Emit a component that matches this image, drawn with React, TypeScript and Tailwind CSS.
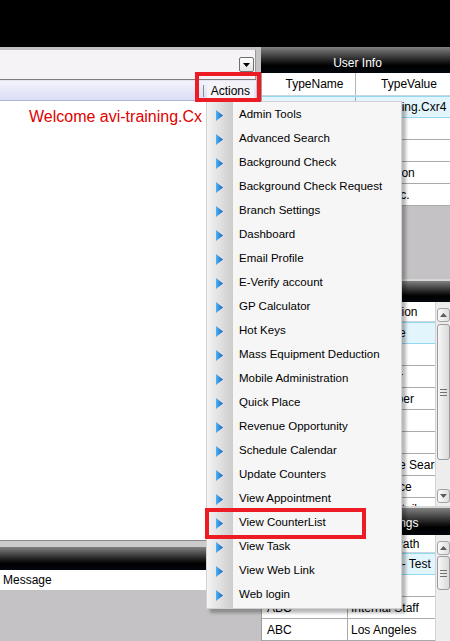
import React from 'react';
import clsx from 'clsx';

const menuItems = [
  'Admin Tools',
  'Advanced Search',
  'Background Check',
  'Background Check Request',
  'Branch Settings',
  'Dashboard',
  'Email Profile',
  'E-Verify account',
  'GP Calculator',
  'Hot Keys',
  'Mass Equipment Deduction',
  'Mobile Administration',
  'Quick Place',
  'Revenue Opportunity',
  'Schedule Calendar',
  'Update Counters',
  'View Appointment',
  'View CounterList',
  'View Task',
  'View Web Link',
  'Web login',
];

const userInfoRows: [string, string][] = [
  ['UserName', 'avi-training.Cxr4'],
  ['FirstName', ''],
  ['LastName', ''],
  ['Department', 'IT Division'],
  ['Company', 'Staff, Inc.'],
];

const notificationRows: [string, string][] = [
  ['Alert', 'Candidate'],
  ['Alert', 'Order'],
  ['Alert', 'Customer'],
  ['Task', 'Timekeeper'],
  ['Task', 'Invoice'],
  ['Task', 'Payroll'],
  ['Search', 'Candidate Search'],
  ['Report', 'Attendance'],
  ['Report', 'Billing Detail'],
];

const branchRows: [string, string][] = [
  ['ABC', 'Anaheim - Test'],
  ['', ''],
  ['ABC', 'Internal Staff'],
  ['ABC', 'Los Angeles'],
];

const headerBg =
  'bg-[linear-gradient(to_bottom,#808080,#4a4a4a_30%,#161616_58%,#000_72%,#03070d)]';

function DarkHeader({ title, className }: { title?: string; className: string }) {
  return (
    <div className={clsx('flex justify-center text-[12px] text-white', headerBg, className)}>
      {title}
    </div>
  );
}

function Arrow() {
  return (
    <svg width="7" height="11" viewBox="0 0 7 11">
      <defs>
        <linearGradient id="arr" x1="0" y1="0" x2="1" y2="0">
          <stop offset="0" stopColor="#4fb4f4" />
          <stop offset="1" stopColor="#0c63c4" />
        </linearGradient>
      </defs>
      <polygon points="0,0 7,5.5 0,11" fill="url(#arr)" />
    </svg>
  );
}

function ActionsMenu() {
  return (
    <div className="absolute left-[206px] top-[101px] flex w-[196px] border border-[#d2d2d2] bg-[#f6f6f6] shadow-[4px_4px_3px_rgba(0,0,0,0.28)]">
      <div className="flex w-[26px] flex-col bg-gradient-to-r from-[#f4f4f4] to-[#cdcdcd] py-px">
        {menuItems.map((item) => (
          <div key={item} className="flex h-[24px] items-center pl-[9px]">
            <Arrow />
          </div>
        ))}
      </div>
      <div className="flex flex-1 flex-col py-px pl-[6px] text-[11.5px]">
        {menuItems.map((item) => (
          <div key={item} className="flex h-[24px] items-center whitespace-nowrap">
            {item}
          </div>
        ))}
      </div>
    </div>
  );
}

function ScrollButton({ up }: { up?: boolean }) {
  return (
    <div className="flex h-[14px] w-[13px] items-center justify-center rounded-[3px] border border-[#a3a3a3] bg-gradient-to-r from-[#fbfbfb] to-[#dedede]">
      <svg width="7" height="4" viewBox="0 0 7 4">
        <polygon points={up ? '0,4 7,4 3.5,0' : '0,0 7,0 3.5,4'} fill="#5c5c5c" />
      </svg>
    </div>
  );
}

function ScrollBar({ className, thumb, showDown }: { className: string; thumb: string; showDown?: boolean }) {
  return (
    <div className={clsx('flex w-[15px] flex-col items-center border-l border-[#d4d4d4] bg-[#ededed]', className)}>
      <ScrollButton up />
      <div
        className={clsx(
          'flex w-[13px] flex-col items-center justify-center gap-[2px] rounded-[3px] border border-[#9b9b9b] bg-gradient-to-r from-[#f7f7f7] to-[#dadada]',
          thumb
        )}
      >
        <div className="h-px w-[7px] bg-[#707070]" />
        <div className="h-px w-[7px] bg-[#707070]" />
        <div className="h-px w-[7px] bg-[#707070]" />
      </div>
      <div className="flex-1" />
      {showDown && <ScrollButton />}
    </div>
  );
}

type GridProps = {
  firstCol: string;
  headers: [string, string];
  headerClass: string;
  headerPad: string;
  rows: [string, string][];
  selected: number;
};

function Grid({ firstCol, headers, headerClass, headerPad, rows, selected }: GridProps) {
  return (
    <div className="min-w-0 flex-1 overflow-hidden border-l border-[#9c9c9c] bg-white">
      <div className={clsx('flex border-b border-[#c9d6df]', headerClass)}>
        <div className={clsx(firstCol, 'flex items-center justify-center border-r border-[#b4b4b4]', headerPad)}>
          {headers[0]}
        </div>
        <div className={clsx('flex flex-1 items-center justify-center', headerPad)}>{headers[1]}</div>
      </div>
      {rows.map(([a, b], i) => (
        <div
          key={i}
          className={clsx(
            'flex h-[22px]',
            i === selected ? 'border-y border-[#94d8f2] bg-[#e2f5fc]' : 'border-b border-[#aaaaaa]'
          )}
        >
          <div className={clsx(firstCol, 'flex items-center overflow-hidden whitespace-nowrap border-r border-[#aaaaaa] pl-[5px]')}>
            {a}
          </div>
          <div className="flex flex-1 items-center overflow-hidden whitespace-nowrap pl-[3px]">{b}</div>
        </div>
      ))}
    </div>
  );
}

function LeftSide() {
  return (
    <div className="flex w-[256px] flex-col">
      <div className="h-[3px] bg-[#c2c0c2]" />
      <div className="flex h-[29px] items-center justify-end border-r border-[#9a9a9a] bg-[#f6f3f6] pr-px">
        <div className="flex h-[15px] w-[15px] items-center justify-center rounded-[2px] border border-[#6f6f6f] bg-gradient-to-b from-white to-[#e4e4e4]">
          <svg width="7" height="4" viewBox="0 0 7 4">
            <polygon points="0,0 7,0 3.5,4" fill="#000" />
          </svg>
        </div>
      </div>
      <div className="h-[2px] border-t border-[#7c7c7c] bg-[#e6e6ee]" />
      <div className="flex h-[20px] items-center justify-end border-b border-[#b3b7db] bg-gradient-to-b from-[#f3f3fc] to-[#dadef5] pr-[2px]">
        <div className="mr-[3px] h-[12px] w-px bg-[#8e8e8e]" />
        <div className="flex h-[17px] items-center bg-[#f3f3f8] px-[4px] text-[12px]">Actions</div>
      </div>
      <div className="flex-1 bg-white pl-[29px] pt-[8px]">
        <div className="whitespace-nowrap text-[16px] leading-none text-[#e00000]">Welcome avi-training.Cx</div>
      </div>
      <div className="flex h-[101px] flex-col border-t border-[#8a8a8a]">
        <div className="h-[6px] bg-[#cbcbcb]" />
        <DarkHeader className="h-[23px]" />
        <div className="flex h-[20px] items-center bg-white pl-[3px] text-[12px]">Message</div>
        <div className="flex-1 bg-[#c4c2c4]" />
      </div>
    </div>
  );
}

function RightSide() {
  return (
    <div className="ml-[5px] flex w-[189px] flex-col">
      <DarkHeader title="User Info" className="h-[26px] pl-[4px] pt-[10px]" />
      <div className="flex h-[133px]">
        <Grid
          firstCol="w-[94px]"
          headers={['TypeName', 'TypeValue']}
          headerClass="h-[23px]"
          headerPad="pl-[12px]"
          rows={userInfoRows}
          selected={0}
        />
      </div>
      <div className="h-[73px]" />
      <div className="h-[2px] bg-[#d6d6d6]" />
      <DarkHeader title="Notifications" className="h-[21px] pt-[5px]" />
      <div className="flex h-[204px]">
        <Grid
          firstCol="w-[86px]"
          headers={['Type', 'Description']}
          headerClass="h-[20px]"
          headerPad="pr-[8px]"
          rows={notificationRows}
          selected={0}
        />
        <ScrollBar className="pt-[6px] pb-[3px]" thumb="mt-[2px] h-[136px]" showDown />
      </div>
      <div className="h-[2px] bg-[#d6d6d6]" />
      <DarkHeader title="Branch Default Settings" className="h-[27px] pt-[9px]" />
      <div className="flex h-[106px]">
        <Grid
          firstCol="w-[86px]"
          headers={['Company', 'Branch Path']}
          headerClass="h-[18px]"
          headerPad="pr-[10px]"
          rows={branchRows}
          selected={0}
        />
        <ScrollBar className="pt-[6px]" thumb="mt-px h-[34px]" />
      </div>
    </div>
  );
}

export default function App() {
  return (
    <div className="relative h-[641px] w-[450px] overflow-hidden bg-[#c4c2c4] font-['Liberation_Sans',Arial,sans-serif] text-[12px] leading-none text-black">
      <div className="h-[47px] bg-black" />
      <div className="flex h-[594px]">
        <LeftSide />
        <RightSide />
      </div>
      <ActionsMenu />
      <div className="absolute left-[195px] top-[72px] h-[30px] w-[66px] border-4 border-[#ed1c24]" />
      <div className="absolute left-[205px] top-[508px] h-[31px] w-[161px] border-4 border-[#ed1c24]" />
    </div>
  );
}
